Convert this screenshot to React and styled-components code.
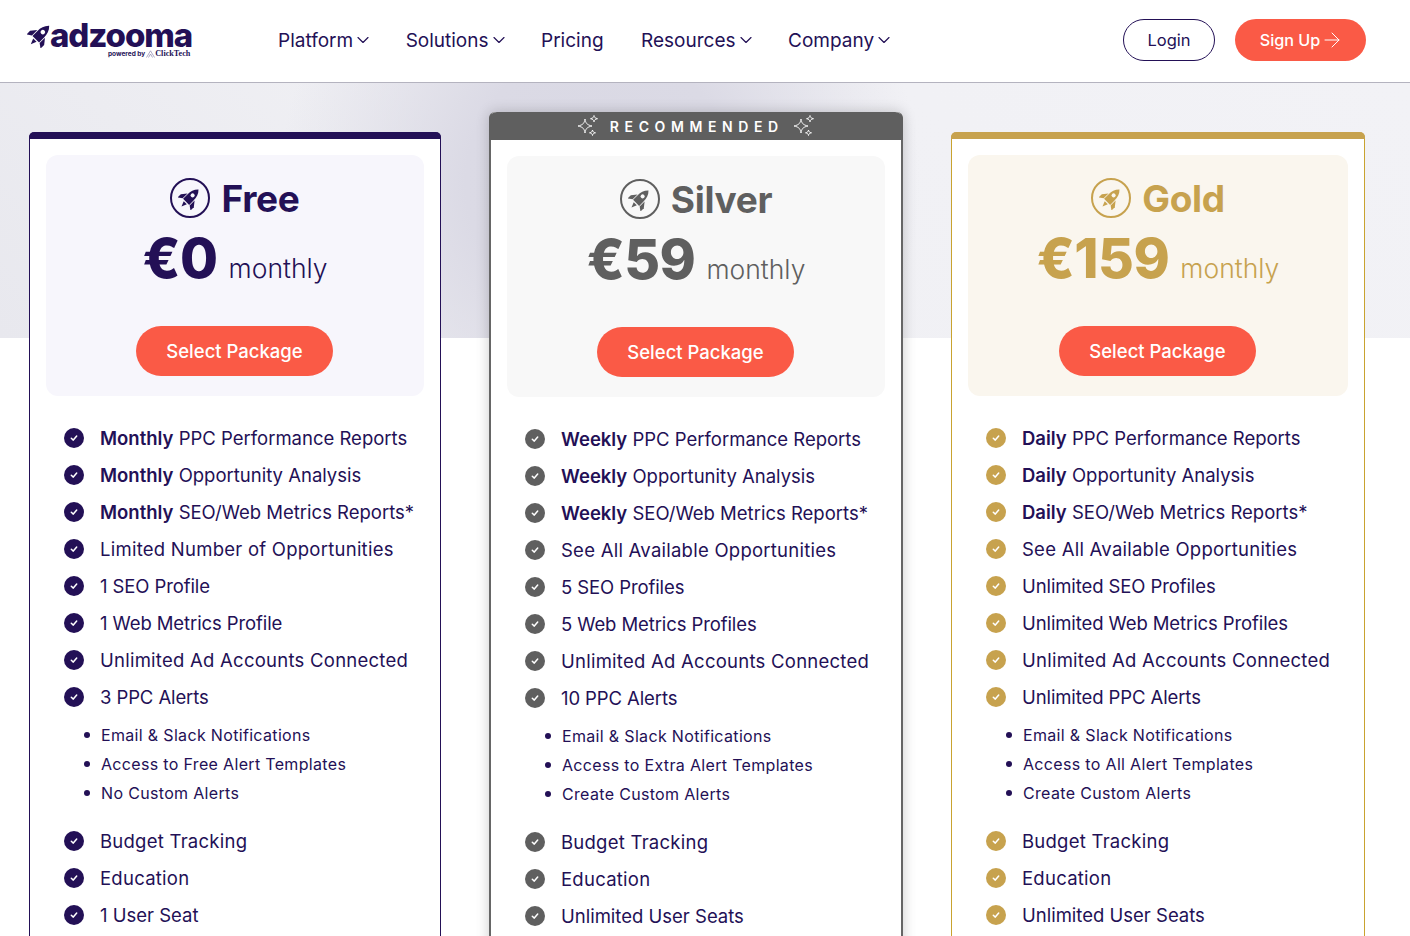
import React from 'react';
import styled, { createGlobalStyle } from 'styled-components';
import { ChevronDown, ArrowRight } from 'lucide-react';

const FONT = `"Inter", "Liberation Sans", sans-serif`;
const Global = createGlobalStyle`
  * { box-sizing: border-box; }
  html, body { margin: 0; padding: 0; height: 100%; overflow: hidden; background: #fff; font-family: ${FONT}; }
`;
const Page = styled.div`height: 936px; overflow: hidden; background: #fff;`;
const Nav = styled.header`
  height: 83px; border-bottom: 1px solid #b4b3bf; display: flex; align-items: center; padding: 0 44px 2px 27px; color: #231056;
`;
const Logo = styled.div`width: 251px; display: flex; flex-direction: column; align-items: flex-start; flex: none; margin-bottom: 3px;`;
const LogoMain = styled.div`display: flex; align-items: center; height: 30px;`;
const LogoWord = styled.span`font-size: 33px; font-weight: 800; letter-spacing: -1.1px; color: #231056; line-height: 30px; margin-left: -3px;`;
const LogoSub = styled.div`font-size: 6.5px; line-height: 8px; height: 8px; font-weight: 700; margin-left: 81px; display: flex; align-items: center; gap: 1px; white-space: nowrap; color: #231056;`;
const Click = styled.span`font-family: "Liberation Serif", serif; font-size: 8.2px; margin-left: -1px;`;
const Menu = styled.nav`display: flex; gap: 37.500px; flex: 1; align-items: center;`;
const MenuItem = styled.a`font-size: 19px; display: flex; align-items: center; color: #231056;`;
const Caret = styled(ChevronDown)`margin-right: -5px; flex: none;`;
const Login = styled.button`
  width: 92px; height: 42px; border-radius: 21px; border: 1px solid #231056; background: #fff; color: #231056; font: 400 16.5px ${FONT};
`;
const SignUp = styled.button`
  width: 131px; height: 42px; margin-left: 20px; padding: 0 0 0 3px; border-radius: 21px; border: 0; background: #fa5a46; color: #fff; font: 500 16.200px ${FONT};
  display: flex; align-items: center; justify-content: center; gap: 0;
`;
const Main = styled.main`
  padding: 49px 45px 0 29px;
  background:
    radial-gradient(ellipse 320px 320px at 600px 100px, #d9d8e4 0%, #dbdae5 42%, rgba(219,218,229,0) 100%) top / 100% 255px no-repeat,
    linear-gradient(45deg, #e8e8ee 0%, #f0f0f4 40%, #f2f2f6 100%) top / 100% 255px no-repeat;
`;
const Cards = styled.div`display: grid; grid-template-columns: 412px 414px 414px; gap: 48px; align-items: start;`;
const Card = styled.section`
  background: #fff; border: solid ${p => p.$edge}; border-width: 0 ${p => p.$side}px; border-radius: 6px 6px 0 0;
  margin-top: ${p => p.$lift ? -20 : 0}px; height: 860px;
  ${p => p.$lift && 'box-shadow: 0 0 14px rgba(0,0,0,.2);'}
`;
const TopBar = styled.div`height: 7px; background: ${p => p.$color}; margin: 0 -1px; border-radius: 5px 5px 0 0;`;
const RecBar = styled.div`
  height: 28px; margin: 0 -2px; background: ${p => p.$color}; border-radius: 8px 8px 0 0; color: #fff;
  display: flex; align-items: center; justify-content: center; gap: 13px; font-size: 14px; font-weight: 600; letter-spacing: 5.600px;
`;
const RecText = styled.span`margin: 0 -3.600px 0 -2px;`;
const Head = styled.div`
  margin: 16px 16px 0; height: 241px; background: ${p => p.$bg}; border-radius: 12px; color: ${p => p.$color};
  display: flex; flex-direction: column; align-items: center; padding-top: 22px;
`;
const Title = styled.div`display: flex; align-items: center; gap: 11px; height: 42px; font-size: 37px; font-weight: 700; letter-spacing: -.3px;`;
const Price = styled.div`display: flex; align-items: baseline; gap: 11px; margin-top: 8px; height: 62px; line-height: 62px;`;
const Amount = styled.span`font-size: 55px; font-weight: 800; letter-spacing: -.5px;`;
const Period = styled.span`font-size: 26.500px; font-weight: 300;`;
const Select = styled.button`
  margin: 37px 0 0 -1px; width: 197px; height: 50px; border-radius: 25px; border: 0; background: #fa5a46; color: #fff; font: 500 18.5px ${FONT};
`;
const Features = styled.ul`list-style: none; margin: 23px 0 0; padding: 0 0 0 34px;`;
const Feature = styled.li`
  display: flex; align-items: center; height: 37px; font-size: 18.5px; color: ${p => p.$ink}; white-space: nowrap; gap: 16px;
  letter-spacing: ${p => p.$track}px;
`;
const Strong = styled.b`font-weight: 600;`;
const Subs = styled.ul`list-style: none; margin: 5px 0 15px; padding: 0 0 0 20px; color: ${p => p.$ink};`;
const Sub = styled.li`
  display: flex; align-items: center; gap: 11px; height: 29px; font-size: 16px; letter-spacing: .33px; white-space: nowrap;
  &::before { content: ''; width: 6px; height: 6px; border-radius: 50%; background: currentColor; flex: none; }
`;
const Badge = styled.span`
  width: 40px; height: 40px; border-radius: 50%; border: 2px solid ${p => p.$color}; display: flex; align-items: center; justify-content: center; flex: none;
`;
const Tick = styled.span`
  width: 20px; height: 20px; border-radius: 50%; background: ${p => p.$color}; display: flex; align-items: center; justify-content: center; flex: none;
`;

const Rocket = ({ size, color }) => (
  <svg width={size} height={size} viewBox="0 0 24 24" fill={color}>
    <g transform="rotate(45 12 12)">
      <path fillRule="evenodd" d="M12 0C15.200 3 16.300 7 16.300 11V17.500H7.700V11C7.700 7 8.800 3 12 0ZM12 6.200a2.100 2.100 0 1 0 0 4.200 2.100 2.100 0 0 0 0-4.200Z" />
      <path d="M7 10.500 2.800 15.800V20.500L7 17.500Z" />
      <path d="M17 10.500 21.200 15.800V20.500L17 17.500Z" />
      <path d="M9.800 18.700H14.200L12 24Z" />
    </g>
  </svg>
);
const Check = () => (
  <svg width="10" height="10" viewBox="0 0 10 10" fill="none" stroke="#fff" strokeWidth="1.500" strokeLinecap="round" strokeLinejoin="round"><path d="M2.300 5.300 4.300 7.100 7.700 3" /></svg>
);
const Spark = () => (
  <svg width="22" height="22" viewBox="0 0 22 22" fill="none" stroke="#fff" strokeWidth=".9" strokeLinejoin="round">
    <path d="M8 4c.7 4.400 2 5.900 7 7-5 1.100-6.300 2.600-7 7-.7-4.400-2-5.900-7-7C6 9.900 7.300 8.400 8 4z" />
    <path d="M17 0.500c.3 1.900.9 2.600 3.500 3.200-2.600.6-3.200 1.300-3.500 3.200-.3-1.900-.9-2.600-3.500-3.200C16.100 3.100 16.700 2.400 17 .5z" />
    <path d="M15.500 15c.3 1.700.8 2.300 3 2.800-2.200.5-2.700 1.100-3 2.700-.3-1.600-.8-2.200-3-2.700 2.200-.5 2.700-1.100 3-2.800z" />
  </svg>
);
const ClickMark = () => (
  <svg width="9" height="8" viewBox="0 0 9 8" fill="none" stroke="#8d86ad" strokeWidth=".7"><path d="M.5 7.500 4.500.8 8.500 7.500M2.500 7.500 4.500 4l2 3.500" /></svg>
);

const plans = [
  { name: 'Free', price: '€0', color: '#231056', edge: '#231056', bg: '#f7f6fc', side: 1, freq: 'Monthly', head: 'Limited Number of Opportunities', seo: '1 SEO Profile', web: '1 Web Metrics Profile', alerts: '3 PPC Alerts', subs: ['Email & Slack Notifications', 'Access to Free Alert Templates', 'No Custom Alerts'], seats: '1 User Seat' },
  { name: 'Silver', price: '€59', color: '#5f5f5f', edge: '#666666', bg: '#f8f8f8', side: 2, lift: true, freq: 'Weekly', head: 'See All Available Opportunities', seo: '5 SEO Profiles', web: '5 Web Metrics Profiles', alerts: '10 PPC Alerts', subs: ['Email & Slack Notifications', 'Access to Extra Alert Templates', 'Create Custom Alerts'], seats: 'Unlimited User Seats' },
  { name: 'Gold', price: '€159', color: '#c7a24e', edge: '#c9a32f', bg: '#faf6ee', side: 1, freq: 'Daily', head: 'See All Available Opportunities', seo: 'Unlimited SEO Profiles', web: 'Unlimited Web Metrics Profiles', alerts: 'Unlimited PPC Alerts', subs: ['Email & Slack Notifications', 'Access to All Alert Templates', 'Create Custom Alerts'], seats: 'Unlimited User Seats' },
];

const INK = '#231056';
const Item = ({ plan, track = .25, children }) => (
  <Feature $ink={INK} $track={track}><Tick $color={plan.color}><Check /></Tick><span>{children}</span></Feature>
);

const Plan = ({ plan }) => (
  <Card $edge={plan.edge} $side={plan.side} $lift={plan.lift}>
    {plan.lift ? (
      <RecBar $color={plan.color}><Spark /><RecText>RECOMMENDED</RecText><Spark /></RecBar>
    ) : <TopBar $color={plan.color} />}
    <Head $bg={plan.bg} $color={plan.color}>
      <Title><Badge $color={plan.color}><Rocket size={24} color={plan.color} /></Badge>{plan.name}</Title>
      <Price><Amount>{plan.price}</Amount><Period>monthly</Period></Price>
      <Select>Select Package</Select>
    </Head>
    <Features>
      <Item plan={plan} track={0}><Strong>{plan.freq}</Strong> PPC Performance Reports</Item>
      <Item plan={plan} track={0}><Strong>{plan.freq}</Strong> Opportunity Analysis</Item>
      <Item plan={plan} track={0}><Strong>{plan.freq}</Strong> SEO/Web Metrics Reports*</Item>
      <Item plan={plan}>{plan.head}</Item>
      <Item plan={plan} track={-.1}>{plan.seo}</Item>
      <Item plan={plan} track={-.1}>{plan.web}</Item>
      <Item plan={plan}>Unlimited Ad Accounts Connected</Item>
      <Item plan={plan} track={-.1}>{plan.alerts}</Item>
      <Subs $ink={INK}>{plan.subs.map(s => <Sub key={s}>{s}</Sub>)}</Subs>
      <Item plan={plan}>Budget Tracking</Item>
      <Item plan={plan}>Education</Item>
      <Item plan={plan} track={0}>{plan.seats}</Item>
    </Features>
  </Card>
);

export default function App() {
  const caret = <Caret size={20} strokeWidth={1.4} />;
  return (
    <Page>
      <Global />
      <Nav>
        <Logo>
          <LogoMain><Rocket size={26} color={INK} /><LogoWord>adzooma</LogoWord></LogoMain>
          <LogoSub>powered by <ClickMark /><Click>ClickTech</Click></LogoSub>
        </Logo>
        <Menu>
          <MenuItem>Platform{caret}</MenuItem>
          <MenuItem>Solutions{caret}</MenuItem>
          <MenuItem>Pricing</MenuItem>
          <MenuItem>Resources{caret}</MenuItem>
          <MenuItem>Company{caret}</MenuItem>
        </Menu>
        <Login>Login</Login>
        <SignUp>Sign Up<ArrowRight size={24} strokeWidth={1} /></SignUp>
      </Nav>
      <Main>
        <Cards>{plans.map(p => <Plan key={p.name} plan={p} />)}</Cards>
      </Main>
    </Page>
  );
}
